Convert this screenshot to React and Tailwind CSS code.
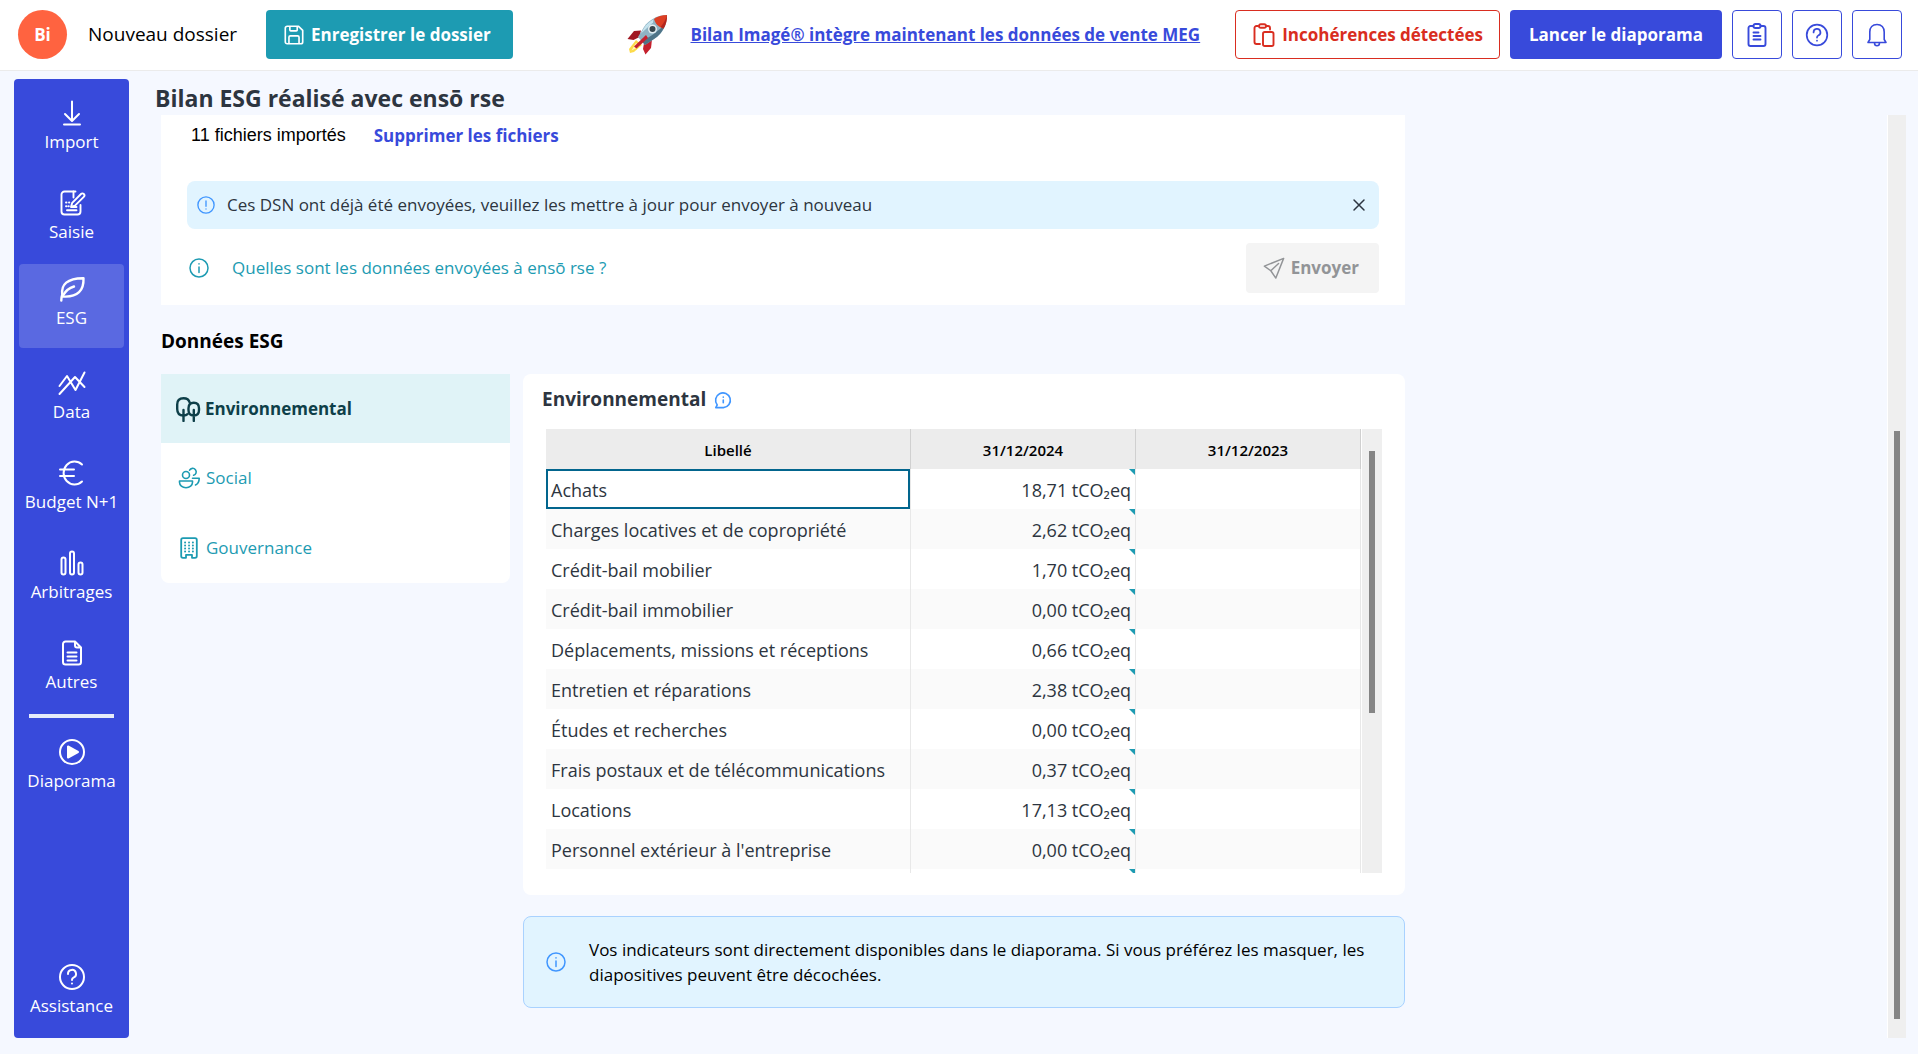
const NAV = [
  { label: 'Import', icon: ImportIcon },
  { label: 'Saisie', icon: EntryIcon },
  { label: 'ESG', icon: LeafIcon, active: true },
  { label: 'Data', icon: DataIcon },
  { label: 'Budget N+1', icon: EuroIcon },
  { label: 'Arbitrages', icon: BarsIcon },
  { label: 'Autres', icon: FileIcon },
];

const ROWS = [
  { label: 'Achats', value: '18,71', selected: true },
  { label: 'Charges locatives et de copropriété', value: '2,62' },
  { label: 'Crédit-bail mobilier', value: '1,70' },
  { label: 'Crédit-bail immobilier', value: '0,00' },
  { label: 'Déplacements, missions et réceptions', value: '0,66' },
  { label: 'Entretien et réparations', value: '2,38' },
  { label: 'Études et recherches', value: '0,00' },
  { label: 'Frais postaux et de télécommunications', value: '0,37' },
  { label: 'Locations', value: '17,13' },
  { label: "Personnel extérieur à l'entreprise", value: '0,00' },
  { label: '', value: '' },
];

function Svg({ box = 28, width = 2, className = 'size-7', children }) {
  return (
    <svg
      viewBox={`0 0 ${box} ${box}`}
      className={`shrink-0 ${className}`}
      fill="none"
      stroke="currentColor"
      strokeWidth={width}
      strokeLinecap="round"
      strokeLinejoin="round"
      aria-hidden="true"
    >
      {children}
    </svg>
  );
}

function ImportIcon() {
  return (
    <Svg>
      <path d="M14 2.500v19M7 15l7 7 7-7M6 25.500h16" />
    </Svg>
  );
}

function EntryIcon() {
  return (
    <Svg width={1.9}>
      <path d="M17.500 2.500H6.500a3 3 0 0 0-3 3v17a3 3 0 0 0 3 3h13a3 3 0 0 0 3-3V16" />
      <path d="M15.500 2.500v6M13 18l1.200-4.200 8.800-8.800a1.900 1.900 0 0 1 2.800 2.800l-8.800 8.800zM9 21.300h9.500M13.500 18h5" />
      <path d="M8 13.500h.5M11 13.500h.3M8 17.300h.5M10.500 17.300h.3" />
    </Svg>
  );
}

function LeafIcon() {
  return (
    <Svg width={2.4}>
      <path d="M3.300 25.500c0-3 .5-4.500 1-6C3 10 9 3 25.500 3.200 26 15 20 22.500 5 21.500" />
      <path d="M5 20.500c2.500-4.500 6-7.500 11-9" />
    </Svg>
  );
}

function DataIcon() {
  return (
    <Svg>
      <path d="M1.500 17 9 7l8.500 14L26.500 3.500M1.500 25 17 8l9.500 10" />
    </Svg>
  );
}

function EuroIcon() {
  return (
    <Svg>
      <path d="M24 5.500A11 11.500 0 1 0 24 22.500M2 10.500h14M2 17h14" />
    </Svg>
  );
}

function BarsIcon() {
  return (
    <Svg width={2}>
      <rect x="3.500" y="8.500" width="4" height="17" rx="2" />
      <rect x="12" y="2.500" width="4" height="23" rx="2" />
      <rect x="20.500" y="13.500" width="4" height="12" rx="2" />
    </Svg>
  );
}

function FileIcon() {
  return (
    <Svg width={2}>
      <path d="M17 2.500H7.500a2.500 2.500 0 0 0-2.500 2.500v18a2.500 2.500 0 0 0 2.500 2.500h13a2.500 2.500 0 0 0 2.500-2.500V8.500zM17 2.500v4a2 2 0 0 0 2 2h4M9.500 13.500h9M9.500 17.500h9M9.500 21.500h9" />
    </Svg>
  );
}

function PlayIcon() {
  return (
    <Svg>
      <circle cx="14" cy="14" r="12" />
      <path d="M10 8.500v11l10-5.500z" fill="currentColor" />
    </Svg>
  );
}

function HelpIcon({ className, width = 2 }) {
  return (
    <Svg className={className} width={width}>
      <circle cx="14" cy="14" r="12" />
      <path d="M10 11a4 4 0 1 1 5.500 3.600c-1 .5-1.500 1-1.500 2.400M14 20.500v.1" />
    </Svg>
  );
}

function InfoIcon({ className, width = 1.5 }) {
  return (
    <Svg box={20} width={width} className={className}>
      <circle cx="10" cy="10" r="9" />
      <path d="M10 9v5.500M10 5.800v.1" />
    </Svg>
  );
}

function AlertIcon() {
  return (
    <Svg box={20} width={1.500} className="size-[18px] text-[#4096ff]">
      <circle cx="10" cy="10" r="9" />
      <path d="M10 5.500v6M10 14.400v.1" />
    </Svg>
  );
}

function CommentInfoIcon() {
  return (
    <Svg box={20} width={1.800} className="size-[18px] text-[#4096ff]">
      <path d="M2 18.500l1.600-3A8.200 8.200 0 1 1 10.500 18.500z" />
      <path d="M10.300 10v3M10.300 6.800v.1" />
    </Svg>
  );
}

function SaveIcon() {
  return (
    <Svg box={24} width={1.800} className="mr-1.5 size-[22px]">
      <path d="M2.500 4.500a2 2 0 0 1 2-2h12.500l4.500 4.500v12.500a2 2 0 0 1-2 2h-15a2 2 0 0 1-2-2zM7.500 2.500v4a1 1 0 0 0 1 1h6a1 1 0 0 0 1-1v-4M6.500 21.500v-7a1.500 1.500 0 0 1 1.500-1.500h8a1.500 1.500 0 0 1 1.500 1.500v7" />
    </Svg>
  );
}

function PasteIcon() {
  return (
    <Svg box={24} width={1.900} className="mr-1.5 size-6">
      <path d="M6 3H4.500A2 2 0 0 0 2.500 5v14a2 2 0 0 0 2 2H8M14.500 3H16a2 2 0 0 1 2 2v1.500" />
      <rect x="7" y="1.200" width="7" height="3.600" rx="1.800" />
      <rect x="11" y="9" width="10.500" height="14" rx="1.800" />
    </Svg>
  );
}

function ClipboardIcon() {
  return (
    <Svg box={24} width={1.900} className="size-6">
      <path d="M8.500 3H5.500A2 2 0 0 0 3.500 5v16a2 2 0 0 0 2 2h13a2 2 0 0 0 2-2V5a2 2 0 0 0-2-2h-3" />
      <rect x="8.500" y="1" width="7" height="4" rx="1.800" />
      <path d="M8.500 9.500h5M8.500 13h7M8.500 16.500h7" />
    </Svg>
  );
}

function BellIcon() {
  return (
    <Svg box={24} width={1.600} className="size-6">
      <path d="M12 1.500c-4.500 0-7.200 3-7.200 7.500v7.500L3 19.500h18l-1.800-3V9c0-4.500-2.700-7.500-7.200-7.500zM9.500 20a2.500 2.800 0 0 0 5 0" />
    </Svg>
  );
}

function SendIcon() {
  return (
    <Svg box={24} width={1.600} className="mr-1.5 size-[22px]">
      <path d="M22.500 1.500 1.500 10l7 5 5.500 8zM8.500 15 17 7" />
    </Svg>
  );
}

function TreesIcon() {
  return (
    <Svg box={26} width={2.400} className="size-[26px]">
      <path d="M12.500 18.200c-1 1-2.500 1.300-4 1.300-4.300 0-6.300-2.500-6.300-6.500V8.500C2.200 4.500 4.500 2.200 8.500 2.200c3.300 0 5.500 1.600 6.200 4.300" />
      <path d="M18.800 6.800c-3.300 0-5.300 2.200-5.300 5.500v1.700c0 3.700 1.800 5.500 5.300 5.500s5.200-1.800 5.200-5.500v-1.700c0-3.300-2-5.500-5.200-5.500zM8.500 14v11M18.800 14v11" />
    </Svg>
  );
}

function PeopleIcon() {
  return (
    <Svg box={22} width={1.600} className="mr-1 ml-px size-[22px]">
      <circle cx="8" cy="8" r="3.500" />
      <path d="M1.500 14h13v1.200c0 3-2.800 5.500-6.500 5.500s-6.500-2.500-6.500-5.500zM11.600 3.200a3.500 3.500 0 1 1 4 5M14.500 11.200h6.700c0 3.500-1.500 5.800-3.700 6.800" />
    </Svg>
  );
}

function BuildingIcon() {
  return (
    <Svg box={22} width={1.800} className="mr-1 ml-px size-[22px]">
      <path d="M5 1.200h12a1.800 1.800 0 0 1 1.800 1.800v16a1.800 1.800 0 0 1-1.800 1.800h-3v-3H8v3H5a1.800 1.800 0 0 1-1.800-1.800V3A1.800 1.800 0 0 1 5 1.200z" />
      <path d="M7 5.500h.2M11 5.500h.1M14.800 5.500h.2M7 8.500h.2M11 8.500h.1M14.800 8.500h.2M7 11.500h.2M11 11.500h.1M14.800 11.500h.2M7 14.500h.2M11 14.500h.1M14.800 14.500h.2" />
    </Svg>
  );
}

function Rocket() {
  return (
    <svg viewBox="0 0 40 40" className="mr-6 size-10 shrink-0" aria-hidden="true">
      <path d="M9 25 2 34l1 4 4-1 8-7z" fill="#fddb4a" />
      <path d="M9 28 4.500 35.500 13 31z" fill="#fff6b8" />
      <path d="M14 15.500 7 16 .5 24l6 1 6-3z" fill="#a01722" />
      <path d="M25 24.500 24 33l-5.500 6.500L16 34l1-6z" fill="#c5202d" />
      <path d="M40 0C31 0 22 4.500 17 12l-6 10 7 8 9-6C36 18 40 10 40 0z" fill="#8fb3c4" />
      <path d="M38 10c-2 6-6 11-11 14l-9 6-3-3.500 11-7z" fill="#4f7487" />
      <path d="M26.500 4.500C23 6.500 19.500 9 17 13l-3 5.500 12-11z" fill="#c5e3ee" />
      <path d="M40 0c-5 0-9.500 1.500-13 4 1.500 5 4 7.500 9.500 9.500C39 9.500 40 5 40 0z" fill="#dd3f24" />
      <path d="M40 0c-1 4-3 8-6.500 12l3 1.500C39 9.500 40 5 40 0z" fill="#b3261e" />
      <circle cx="25.500" cy="14" r="4.500" fill="#e4eef2" />
      <circle cx="25.500" cy="14" r="3" fill="#37474f" />
      <path d="M19 20 7 31.500l2.500 2L21 23z" fill="#c5202d" />
    </svg>
  );
}

function NavItem({ label, icon: Icon, active }) {
  return (
    <button
      className={`flex flex-col items-center justify-center gap-0.5 text-[17px] leading-[26px] text-white ${
        active ? 'mx-[5px] my-[3px] h-[84px] rounded bg-[#5a69e1] pb-1.5' : 'h-[90px] pt-0.5'
      }`}
    >
      <Icon />
      {label}
    </button>
  );
}

function Header() {
  return (
    <header className="flex items-center border-b border-[#ebebeb] bg-white pt-2.5 pr-4 pb-[11px] pl-[18px]">
      <div className="flex size-[49px] items-center justify-center rounded-full bg-[#ff6340] text-[17px] font-bold text-white">
        Bi
      </div>
      <span className="ml-[21px] w-[178px] text-[19px] text-black">Nouveau dossier</span>
      <button className="flex h-[49px] items-center rounded bg-[#1d9bb2] pr-[22px] pl-[17px] text-[17px] font-bold text-white">
        <SaveIcon />
        Enregistrer le dossier
      </button>
      <div className="mr-[35px] ml-auto flex items-center">
        <Rocket />
        <a href="#meg" className="text-[17px] font-bold text-[#384adb] underline">
          Bilan Imagé® intègre maintenant les données de vente MEG
        </a>
      </div>
      <div className="flex gap-2.5">
        <button className="flex h-[49px] items-center rounded border border-[#d92d20] px-4 text-[17px] font-bold text-[#d92d20]">
          <PasteIcon />
          Incohérences détectées
        </button>
        <button className="h-[49px] rounded bg-[#384adb] px-[19px] text-[17px] font-bold text-white">
          Lancer le diaporama
        </button>
        <button aria-label="Notes" className="flex h-[49px] w-[50px] items-center justify-center rounded border border-[#384adb] text-[#384adb]">
          <ClipboardIcon />
        </button>
        <button aria-label="Aide" className="flex h-[49px] w-[50px] items-center justify-center rounded border border-[#384adb] text-[#384adb]">
          <HelpIcon className="size-6" />
        </button>
        <button aria-label="Notifications" className="flex h-[49px] w-[50px] items-center justify-center rounded border border-[#384adb] text-[#384adb]">
          <BellIcon />
        </button>
      </div>
    </header>
  );
}

function Sidebar() {
  return (
    <nav className="flex w-[115px] shrink-0 flex-col rounded bg-[#384adb] pt-0.5 pb-[3px]">
      {NAV.map((item) => (
        <NavItem key={item.label} {...item} />
      ))}
      <div className="mx-[15px] mt-[3px] mb-0.5 h-1 bg-[#e6ebfa]" />
      <NavItem label="Diaporama" icon={PlayIcon} />
      <div className="mt-auto flex flex-col">
        <NavItem label="Assistance" icon={HelpIcon} />
      </div>
    </nav>
  );
}

function FilesCard() {
  return (
    <section className="bg-white px-[26px] pb-3">
      <div className="flex h-[66px] items-start gap-7 px-1 pt-2 text-[17px] leading-[26px]">
        <span className='font-["Liberation_Sans",sans-serif] text-lg leading-6 text-black'>11 fichiers importés</span>
        <button className="font-bold text-[#384adb]">Supprimer les fichiers</button>
      </div>
      <div className="flex h-12 items-center rounded-lg bg-[#e1f4ff] pr-3 pl-2.5 text-[17px] text-[#2d3540]">
        <AlertIcon />
        <span className="ml-3">Ces DSN ont déjà été envoyées, veuillez les mettre à jour pour envoyer à nouveau</span>
        <button aria-label="Fermer" className="ml-auto">
          <Svg box={16} width={1.500} className="size-4">
            <path d="M3 3l10 10M13 3 3 13" />
          </Svg>
        </button>
      </div>
      <div className="mt-3.5 flex items-center">
        <InfoIcon className="ml-0.5 size-5 text-[#1d9bb2]" />
        <a href="#donnees" className="ml-[23px] text-[17px] text-[#1d9bb2]">
          Quelles sont les données envoyées à ensō rse ?
        </a>
        <button disabled className="ml-auto flex h-[50px] items-center rounded bg-[#f4f4f4] pr-5 pl-[17px] text-[17px] font-bold text-[#929497]">
          <SendIcon />
          Envoyer
        </button>
      </div>
    </section>
  );
}

function Tabs() {
  return (
    <div className="flex w-[349px] shrink-0 flex-col rounded-b-lg bg-white text-[17px] text-[#1d9bb2]">
      <button className="flex h-[69px] items-center bg-[#e0f3f7] pl-3.5 font-bold text-[#0e3f49]">
        <TreesIcon />
        <span className="ml-1">Environnemental</span>
      </button>
      <button className="flex h-[70px] items-center pl-4">
        <PeopleIcon />
        <span className="ml-0.5">Social</span>
      </button>
      <button className="flex h-[70px] items-center pl-4">
        <BuildingIcon />
        <span className="ml-0.5">Gouvernance</span>
      </button>
    </div>
  );
}

function DataTable() {
  return (
    <div className="flex h-[444px] gap-px overflow-hidden">
      <table className="flex-1 table-fixed border-separate border-spacing-0 self-start text-lg text-[#2d3540]">
        <thead>
          <tr className="h-10 bg-[#ececec] text-[15px] text-black [&>th]:border-r [&>th]:border-[#d0d0d0] [&>th]:p-0 [&>th]:pt-1 [&>th]:font-semibold">
            <th>Libellé</th>
            <th className="w-[225px]">31/12/2024</th>
            <th className="w-[225px]">31/12/2023</th>
          </tr>
        </thead>
        <tbody>
          {ROWS.map((row) => (
            <tr
              key={row.label}
              className="h-10 even:bg-[#fafafa] [&>td]:h-10 [&>td]:border-r [&>td]:border-[#e8e8e8] [&>td]:p-0"
            >
              <td>
                <div
                  className={`flex h-10 items-center px-[5px] pt-0.5 ${
                    row.selected ? 'outline-2 -outline-offset-2 outline-[#02658d]' : ''
                  }`}
                >
                  {row.label}
                </div>
              </td>
              <td className="relative text-right">
                <svg viewBox="0 0 6 6" className="absolute top-0 right-0 size-1.5" aria-hidden="true">
                  <path d="M0 0h6v6z" fill="#1d9bb2" />
                </svg>
                {row.value && <div className="pt-0.5 pr-1">{row.value} tCO₂eq</div>}
              </td>
              <td />
            </tr>
          ))}
        </tbody>
      </table>
      <div className="w-5 shrink-0 bg-[#efefef]">
        <div className="mx-auto mt-[22px] h-[262px] w-1.5 bg-[#858585]" />
      </div>
    </div>
  );
}

export default function App() {
  return (
    <div className="min-h-screen bg-white pb-px">
      <div className='flex min-h-[calc(100vh-1px)] flex-col bg-[#f5f8ff] font-["Open_Sans",sans-serif]'>
        <Header />
        <div className="flex flex-1 pt-2 pr-3 pb-4 pl-3.5">
          <Sidebar />
          <main className="flex flex-1 flex-col">
            <h1 className="ml-[26px] h-9 text-[23px] leading-[38px] font-bold text-[#2d3540]">
              Bilan ESG réalisé avec ensō rse
            </h1>
            <div className="flex flex-1 justify-between pl-8">
              <div className="w-full max-w-[1244px]">
                <FilesCard />
                <h2 className="mt-[22px] mb-[18px] text-[19px] leading-[29px] font-bold text-black">Données ESG</h2>
                <div className="flex items-start gap-[13px]">
                  <Tabs />
                  <div className="flex-1">
                    <section className="rounded-lg bg-white px-[23px] pt-[11px] pb-[22px]">
                      <h3 className="-ml-1 mb-[15px] flex items-center gap-2 text-[19px] leading-[29px] font-bold text-[#2d3540]">
                        Environnemental
                        <CommentInfoIcon />
                      </h3>
                      <DataTable />
                    </section>
                    <div className="mt-[21px] flex items-center rounded-lg border border-[#a9d2ff] bg-[#e1f4ff] py-5 pr-9 pl-[22px]">
                      <InfoIcon className="mr-[23px] size-5 text-[#4096ff]" />
                      <p className="text-[17px] leading-[25px] text-black">
                        Vos indicateurs sont directement disponibles dans le diaporama. Si vous préférez les masquer, les
                        diapositives peuvent être décochées.
                      </p>
                    </div>
                  </div>
                </div>
              </div>
              <div className="w-[19px] shrink-0 border-l border-white bg-[#efefef]">
                <div className="mx-auto mt-[316px] h-[588px] w-1.5 bg-[#858585]" />
              </div>
            </div>
          </main>
        </div>
      </div>
    </div>
  );
}
